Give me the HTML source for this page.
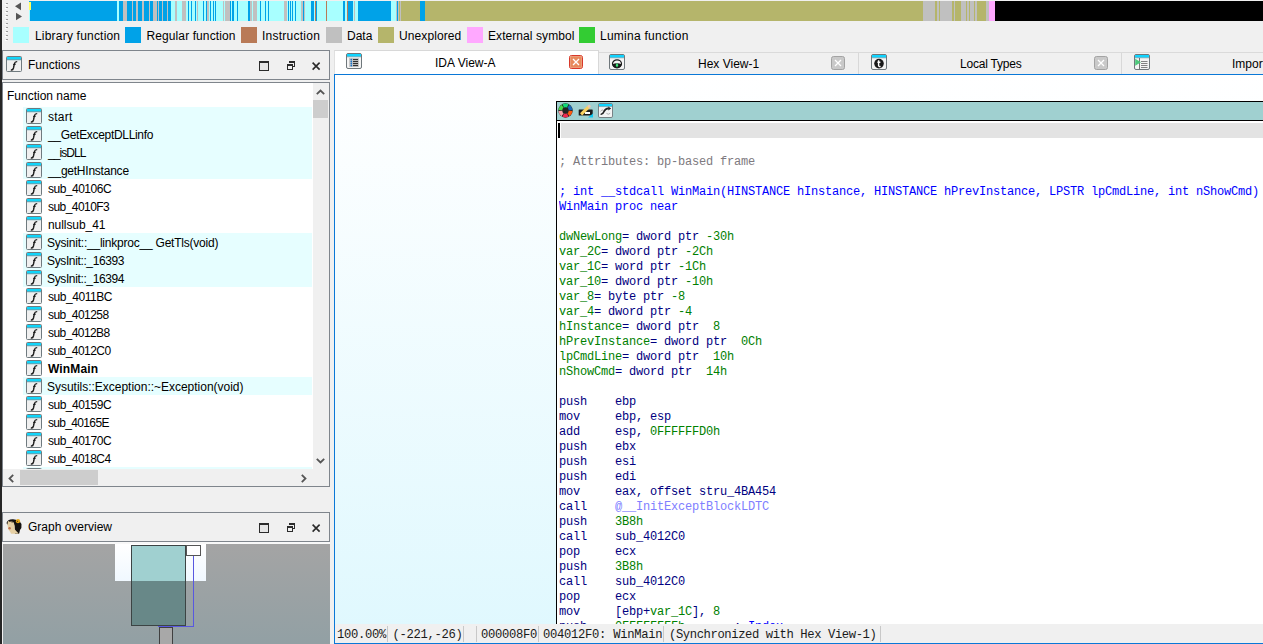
<!DOCTYPE html>
<html><head><meta charset="utf-8"><style>
*{box-sizing:border-box}
html,body{margin:0;padding:0}
body{width:1263px;height:644px;overflow:hidden;position:relative;background:#f0f0f0;font-family:"Liberation Sans",sans-serif;font-size:12px;color:#000}
.a{position:absolute}
svg{display:block}
.row{position:absolute;left:20px;width:289px;height:18px;white-space:nowrap}
.row .fi{position:absolute;left:3px;top:1px;width:16px;height:16px}
.row span{position:absolute;left:25px;top:3px;line-height:14px;transform-origin:0 0}
.cl{height:15px;line-height:15px;white-space:pre}
.code{font-family:"Liberation Mono",monospace;font-size:12px;letter-spacing:-0.2px}
.sw{position:absolute;top:27px;width:16px;height:16px}
.lg{position:absolute;top:29px;line-height:14px}
.tt{position:absolute;top:56px;line-height:14px}
.sep{position:absolute;top:626px;width:1px;height:16px;background:#c8c8c8}
.st{position:absolute;top:626px;line-height:19px;white-space:pre;font-family:"Liberation Mono",monospace;font-size:12.2px;letter-spacing:-0.3px;color:#1a1a1a}
</style></head><body>
<div class="a" style="left:0;top:0;width:2px;height:644px;background:#262626"></div>
<svg class="a" style="left:5px;top:2px" width="4" height="42"><rect x="1" y="1" width="2" height="1" fill="#9a9a9a"/><rect x="0" y="2" width="2" height="1" fill="#ffffff"/><rect x="1" y="5" width="2" height="1" fill="#9a9a9a"/><rect x="0" y="6" width="2" height="1" fill="#ffffff"/><rect x="1" y="9" width="2" height="1" fill="#9a9a9a"/><rect x="0" y="10" width="2" height="1" fill="#ffffff"/><rect x="1" y="13" width="2" height="1" fill="#9a9a9a"/><rect x="0" y="14" width="2" height="1" fill="#ffffff"/><rect x="1" y="17" width="2" height="1" fill="#9a9a9a"/><rect x="0" y="18" width="2" height="1" fill="#ffffff"/><rect x="1" y="21" width="2" height="1" fill="#9a9a9a"/><rect x="0" y="22" width="2" height="1" fill="#ffffff"/><rect x="1" y="25" width="2" height="1" fill="#9a9a9a"/><rect x="0" y="26" width="2" height="1" fill="#ffffff"/><rect x="1" y="29" width="2" height="1" fill="#9a9a9a"/><rect x="0" y="30" width="2" height="1" fill="#ffffff"/><rect x="1" y="33" width="2" height="1" fill="#9a9a9a"/><rect x="0" y="34" width="2" height="1" fill="#ffffff"/><rect x="1" y="37" width="2" height="1" fill="#9a9a9a"/><rect x="0" y="38" width="2" height="1" fill="#ffffff"/></svg>
<!-- nav -->
<div class="a" style="left:29px;top:1px;width:1234px;height:20px;background:linear-gradient(to right,#00a2e8 0px 88px,#a8ffff 88px 90px,#00a2e8 90px 94px,#c0c0c0 94px 98px,#00a2e8 98px 103px,#c0c0c0 103px 104px,#00a2e8 104px 107px,#c0c0c0 107px 109px,#00a2e8 109px 113px,#c0c0c0 113px 115px,#00a2e8 115px 120px,#c0c0c0 120px 121px,#00a2e8 121px 124px,#c0c0c0 124px 128px,#00a2e8 128px 129px,#c0c0c0 129px 130px,#00a2e8 130px 133px,#c0c0c0 133px 134px,#00a2e8 134px 138px,#c0c0c0 138px 139px,#00a2e8 139px 142px,#a8ffff 142px 146px,#c0c0c0 146px 148px,#a8ffff 148px 153px,#c0c0c0 153px 157px,#a8ffff 157px 159px,#00a2e8 159px 160px,#a8ffff 160px 162px,#00a2e8 162px 163px,#a8ffff 163px 166px,#00a2e8 166px 167px,#a8ffff 167px 168px,#c0c0c0 168px 169px,#a8ffff 169px 174px,#00a2e8 174px 175px,#a8ffff 175px 177px,#00a2e8 177px 178px,#c0c0c0 178px 180px,#a8ffff 180px 181px,#00a2e8 181px 182px,#a8ffff 182px 184px,#00a2e8 184px 185px,#a8ffff 185px 186px,#00a2e8 186px 187px,#a8ffff 187px 194px,#c0c0c0 194px 195px,#a8ffff 195px 196px,#c0c0c0 196px 201px,#00a2e8 201px 202px,#a8ffff 202px 203px,#00a2e8 203px 205px,#a8ffff 205px 208px,#00a2e8 208px 209px,#a8ffff 209px 219px,#00a2e8 219px 221px,#c0c0c0 221px 223px,#a8ffff 223px 224px,#c0c0c0 224px 228px,#a8ffff 228px 231px,#00a2e8 231px 232px,#a8ffff 232px 236px,#00a2e8 236px 237px,#a8ffff 237px 239px,#00a2e8 239px 240px,#a8ffff 240px 255px,#c0c0c0 255px 258px,#a8ffff 258px 259px,#00a2e8 259px 260px,#a8ffff 260px 261px,#00a2e8 261px 262px,#a8ffff 262px 263px,#00a2e8 263px 264px,#a8ffff 264px 266px,#00a2e8 266px 267px,#a8ffff 267px 272px,#c0c0c0 272px 274px,#00a2e8 274px 275px,#c0c0c0 275px 276px,#a8ffff 276px 282px,#00a2e8 282px 285px,#a8ffff 285px 286px,#b97a57 286px 287px,#00a2e8 287px 288px,#a8ffff 288px 297px,#b97a57 297px 298px,#a8ffff 298px 314px,#00a2e8 314px 316px,#a8ffff 316px 318px,#b97a57 318px 319px,#00a2e8 319px 324px,#a8ffff 324px 325px,#c0c0c0 325px 326px,#a8ffff 326px 329px,#00a2e8 329px 362px,#a8ffff 362px 367px,#c0c0c0 367px 368px,#00a2e8 368px 369px,#c0c0c0 369px 370px,#b5b56b 370px 371px,#c0c0c0 371px 372px,#b5b56b 372px 391px,#00a2e8 391px 396px,#b5b56b 396px 894px,#c0c0c0 894px 906px,#b5b56b 906px 908px,#c0c0c0 908px 910px,#b5b56b 910px 911px,#c0c0c0 911px 923px,#b5b56b 923px 925px,#c0c0c0 925px 926px,#b5b56b 926px 932px,#c0c0c0 932px 937px,#b5b56b 937px 938px,#c0c0c0 938px 940px,#b5b56b 940px 941px,#c0c0c0 941px 945px,#b5b56b 945px 946px,#c0c0c0 946px 948px,#b5b56b 948px 957px,#c0c0c0 957px 960px,#ffa8ff 960px 966px,#000000 966px 1234px)"></div>
<div class="a" style="left:29px;top:2px;width:2px;height:8px;background:#ffff60"></div><div class="a" style="left:29px;top:10px;width:1px;height:11px;background:#a8ffff"></div>
<svg class="a" style="left:13px;top:1px" width="12" height="21"><polygon points="2,5.3 8,1.5 8,9.2" fill="#555"/><polygon points="3,11.8 3,19.2 9,15.5" fill="#555"/></svg>
<!-- legend -->
<div class="sw" style="left:13px;background:#a8ffff"></div><div class="lg" style="left:35px;letter-spacing:0.2px">Library function</div>
<div class="sw" style="left:125px;background:#00a2e8"></div><div class="lg" style="left:146.5px;letter-spacing:0.1px">Regular function</div>
<div class="sw" style="left:241px;background:#b97a57"></div><div class="lg" style="left:262px;letter-spacing:0.25px">Instruction</div>
<div class="sw" style="left:326px;background:#c0c0c0"></div><div class="lg" style="left:347px">Data</div>
<div class="sw" style="left:378px;background:#b5b56b"></div><div class="lg" style="left:399px;letter-spacing:0.1px">Unexplored</div>
<div class="sw" style="left:467px;background:#ffa8ff"></div><div class="lg" style="left:488px;letter-spacing:0.07px">External symbol</div>
<div class="sw" style="left:579px;background:#33cc33"></div><div class="lg" style="left:600px;letter-spacing:0.26px">Lumina function</div>

<!-- functions header -->
<div class="a" style="left:2px;top:50px;width:328px;height:30px;border:1px solid #7f858c;background:#f0f0f0"></div>
<div class="a" style="left:6px;top:56px"><svg width="16" height="16" viewBox="0 0 16 16"><rect x="0.5" y="0.5" width="15" height="15" rx="1" fill="#f0f0f0" stroke="#6f7a7f"/><rect x="1" y="1" width="14" height="2.6" fill="#11d5fa"/><rect x="1" y="3.4" width="14" height="0.8" fill="#4a8c9a"/><path d="M4.8 13.9 Q6.9 14.4 7.5 12 L8.4 7.6 Q8.9 5.5 11.2 5.6" fill="none" stroke="#1a1a1a" stroke-width="1.4"/><path d="M7.2 8.6 L9.8 8.2" stroke="#1a1a1a" stroke-width="1"/></svg></div>
<div class="a" style="left:28px;top:58px;line-height:14px">Functions</div>
<div class="a" style="left:259px;top:61px;height:10px"><svg width="10" height="10" shape-rendering="crispEdges"><rect x="0" y="0" width="10" height="10" fill="#2b2b2b"/><rect x="1" y="2" width="8" height="7" fill="#e6e6e6"/></svg></div><div class="a" style="left:287px;top:61px;height:10px"><svg width="9" height="9" shape-rendering="crispEdges"><g fill="#2b2b2b"><rect x="2" y="0" width="6" height="2"/><rect x="7" y="2" width="1" height="4"/><rect x="6" y="5" width="2" height="1"/><rect x="0" y="3" width="6" height="2"/><rect x="0" y="5" width="1" height="4"/><rect x="5" y="5" width="1" height="4"/><rect x="0" y="8" width="6" height="1"/></g><rect x="1" y="5" width="4" height="3" fill="#f0f0f0"/></svg></div><div class="a" style="left:312px;top:62px;height:9px"><svg width="9" height="9"><path d="M0.6 0.6 L7.6 7.6 M7.6 0.6 L0.6 7.6" stroke="#2b2b2b" stroke-width="1.6"/></svg></div>

<!-- functions list -->
<div class="a" style="left:2px;top:82px;width:328px;height:405px;border:1px solid #7f858c;background:#fff;overflow:hidden">
  <div class="a" style="left:4px;top:6px;line-height:14px">Function name</div>
  <div class="row" style="top:24px;background:#e6feff"><div class="fi"><svg width="16" height="16" viewBox="0 0 16 16"><rect x="0.5" y="0.5" width="15" height="15" rx="1" fill="#f0f0f0" stroke="#6f7a7f"/><rect x="1" y="1" width="14" height="2.6" fill="#11d5fa"/><rect x="1" y="3.4" width="14" height="0.8" fill="#4a8c9a"/><path d="M4.8 13.9 Q6.9 14.4 7.5 12 L8.4 7.6 Q8.9 5.5 11.2 5.6" fill="none" stroke="#1a1a1a" stroke-width="1.4"/><path d="M7.2 8.6 L9.8 8.2" stroke="#1a1a1a" stroke-width="1"/></svg></div><span style="letter-spacing:0.250px;">start</span></div><div class="row" style="top:42px;background:#e6feff"><div class="fi"><svg width="16" height="16" viewBox="0 0 16 16"><rect x="0.5" y="0.5" width="15" height="15" rx="1" fill="#f0f0f0" stroke="#6f7a7f"/><rect x="1" y="1" width="14" height="2.6" fill="#11d5fa"/><rect x="1" y="3.4" width="14" height="0.8" fill="#4a8c9a"/><path d="M4.8 13.9 Q6.9 14.4 7.5 12 L8.4 7.6 Q8.9 5.5 11.2 5.6" fill="none" stroke="#1a1a1a" stroke-width="1.4"/><path d="M7.2 8.6 L9.8 8.2" stroke="#1a1a1a" stroke-width="1"/></svg></div><span style="letter-spacing:-0.312px;">__GetExceptDLLinfo</span></div><div class="row" style="top:60px;background:#e6feff"><div class="fi"><svg width="16" height="16" viewBox="0 0 16 16"><rect x="0.5" y="0.5" width="15" height="15" rx="1" fill="#f0f0f0" stroke="#6f7a7f"/><rect x="1" y="1" width="14" height="2.6" fill="#11d5fa"/><rect x="1" y="3.4" width="14" height="0.8" fill="#4a8c9a"/><path d="M4.8 13.9 Q6.9 14.4 7.5 12 L8.4 7.6 Q8.9 5.5 11.2 5.6" fill="none" stroke="#1a1a1a" stroke-width="1.4"/><path d="M7.2 8.6 L9.8 8.2" stroke="#1a1a1a" stroke-width="1"/></svg></div><span style="letter-spacing:-0.933px;">__isDLL</span></div><div class="row" style="top:78px;background:#e6feff"><div class="fi"><svg width="16" height="16" viewBox="0 0 16 16"><rect x="0.5" y="0.5" width="15" height="15" rx="1" fill="#f0f0f0" stroke="#6f7a7f"/><rect x="1" y="1" width="14" height="2.6" fill="#11d5fa"/><rect x="1" y="3.4" width="14" height="0.8" fill="#4a8c9a"/><path d="M4.8 13.9 Q6.9 14.4 7.5 12 L8.4 7.6 Q8.9 5.5 11.2 5.6" fill="none" stroke="#1a1a1a" stroke-width="1.4"/><path d="M7.2 8.6 L9.8 8.2" stroke="#1a1a1a" stroke-width="1"/></svg></div><span style="letter-spacing:-0.231px;">__getHInstance</span></div><div class="row" style="top:96px;background:transparent"><div class="fi"><svg width="16" height="16" viewBox="0 0 16 16"><rect x="0.5" y="0.5" width="15" height="15" rx="1" fill="#f0f0f0" stroke="#6f7a7f"/><rect x="1" y="1" width="14" height="2.6" fill="#11d5fa"/><rect x="1" y="3.4" width="14" height="0.8" fill="#4a8c9a"/><path d="M4.8 13.9 Q6.9 14.4 7.5 12 L8.4 7.6 Q8.9 5.5 11.2 5.6" fill="none" stroke="#1a1a1a" stroke-width="1.4"/><path d="M7.2 8.6 L9.8 8.2" stroke="#1a1a1a" stroke-width="1"/></svg></div><span style="letter-spacing:-0.500px;">sub_40106C</span></div><div class="row" style="top:114px;background:transparent"><div class="fi"><svg width="16" height="16" viewBox="0 0 16 16"><rect x="0.5" y="0.5" width="15" height="15" rx="1" fill="#f0f0f0" stroke="#6f7a7f"/><rect x="1" y="1" width="14" height="2.6" fill="#11d5fa"/><rect x="1" y="3.4" width="14" height="0.8" fill="#4a8c9a"/><path d="M4.8 13.9 Q6.9 14.4 7.5 12 L8.4 7.6 Q8.9 5.5 11.2 5.6" fill="none" stroke="#1a1a1a" stroke-width="1.4"/><path d="M7.2 8.6 L9.8 8.2" stroke="#1a1a1a" stroke-width="1"/></svg></div><span style="letter-spacing:-0.556px;">sub_4010F3</span></div><div class="row" style="top:132px;background:transparent"><div class="fi"><svg width="16" height="16" viewBox="0 0 16 16"><rect x="0.5" y="0.5" width="15" height="15" rx="1" fill="#f0f0f0" stroke="#6f7a7f"/><rect x="1" y="1" width="14" height="2.6" fill="#11d5fa"/><rect x="1" y="3.4" width="14" height="0.8" fill="#4a8c9a"/><path d="M4.8 13.9 Q6.9 14.4 7.5 12 L8.4 7.6 Q8.9 5.5 11.2 5.6" fill="none" stroke="#1a1a1a" stroke-width="1.4"/><path d="M7.2 8.6 L9.8 8.2" stroke="#1a1a1a" stroke-width="1"/></svg></div><span style="letter-spacing:-0.067px;">nullsub_41</span></div><div class="row" style="top:150px;background:#e6feff"><div class="fi"><svg width="16" height="16" viewBox="0 0 16 16"><rect x="0.5" y="0.5" width="15" height="15" rx="1" fill="#f0f0f0" stroke="#6f7a7f"/><rect x="1" y="1" width="14" height="2.6" fill="#11d5fa"/><rect x="1" y="3.4" width="14" height="0.8" fill="#4a8c9a"/><path d="M4.8 13.9 Q6.9 14.4 7.5 12 L8.4 7.6 Q8.9 5.5 11.2 5.6" fill="none" stroke="#1a1a1a" stroke-width="1.4"/><path d="M7.2 8.6 L9.8 8.2" stroke="#1a1a1a" stroke-width="1"/></svg></div><span style="margin-left:-1px;letter-spacing:-0.221px;">Sysinit::__linkproc__ GetTls(void)</span></div><div class="row" style="top:168px;background:#e6feff"><div class="fi"><svg width="16" height="16" viewBox="0 0 16 16"><rect x="0.5" y="0.5" width="15" height="15" rx="1" fill="#f0f0f0" stroke="#6f7a7f"/><rect x="1" y="1" width="14" height="2.6" fill="#11d5fa"/><rect x="1" y="3.4" width="14" height="0.8" fill="#4a8c9a"/><path d="M4.8 13.9 Q6.9 14.4 7.5 12 L8.4 7.6 Q8.9 5.5 11.2 5.6" fill="none" stroke="#1a1a1a" stroke-width="1.4"/><path d="M7.2 8.6 L9.8 8.2" stroke="#1a1a1a" stroke-width="1"/></svg></div><span style="margin-left:-1px;letter-spacing:-0.371px;">SysInit::_16393</span></div><div class="row" style="top:186px;background:#e6feff"><div class="fi"><svg width="16" height="16" viewBox="0 0 16 16"><rect x="0.5" y="0.5" width="15" height="15" rx="1" fill="#f0f0f0" stroke="#6f7a7f"/><rect x="1" y="1" width="14" height="2.6" fill="#11d5fa"/><rect x="1" y="3.4" width="14" height="0.8" fill="#4a8c9a"/><path d="M4.8 13.9 Q6.9 14.4 7.5 12 L8.4 7.6 Q8.9 5.5 11.2 5.6" fill="none" stroke="#1a1a1a" stroke-width="1.4"/><path d="M7.2 8.6 L9.8 8.2" stroke="#1a1a1a" stroke-width="1"/></svg></div><span style="margin-left:-1px;letter-spacing:-0.371px;">SysInit::_16394</span></div><div class="row" style="top:204px;background:transparent"><div class="fi"><svg width="16" height="16" viewBox="0 0 16 16"><rect x="0.5" y="0.5" width="15" height="15" rx="1" fill="#f0f0f0" stroke="#6f7a7f"/><rect x="1" y="1" width="14" height="2.6" fill="#11d5fa"/><rect x="1" y="3.4" width="14" height="0.8" fill="#4a8c9a"/><path d="M4.8 13.9 Q6.9 14.4 7.5 12 L8.4 7.6 Q8.9 5.5 11.2 5.6" fill="none" stroke="#1a1a1a" stroke-width="1.4"/><path d="M7.2 8.6 L9.8 8.2" stroke="#1a1a1a" stroke-width="1"/></svg></div><span style="letter-spacing:-0.456px;">sub_4011BC</span></div><div class="row" style="top:222px;background:transparent"><div class="fi"><svg width="16" height="16" viewBox="0 0 16 16"><rect x="0.5" y="0.5" width="15" height="15" rx="1" fill="#f0f0f0" stroke="#6f7a7f"/><rect x="1" y="1" width="14" height="2.6" fill="#11d5fa"/><rect x="1" y="3.4" width="14" height="0.8" fill="#4a8c9a"/><path d="M4.8 13.9 Q6.9 14.4 7.5 12 L8.4 7.6 Q8.9 5.5 11.2 5.6" fill="none" stroke="#1a1a1a" stroke-width="1.4"/><path d="M7.2 8.6 L9.8 8.2" stroke="#1a1a1a" stroke-width="1"/></svg></div><span style="letter-spacing:-0.556px;">sub_401258</span></div><div class="row" style="top:240px;background:transparent"><div class="fi"><svg width="16" height="16" viewBox="0 0 16 16"><rect x="0.5" y="0.5" width="15" height="15" rx="1" fill="#f0f0f0" stroke="#6f7a7f"/><rect x="1" y="1" width="14" height="2.6" fill="#11d5fa"/><rect x="1" y="3.4" width="14" height="0.8" fill="#4a8c9a"/><path d="M4.8 13.9 Q6.9 14.4 7.5 12 L8.4 7.6 Q8.9 5.5 11.2 5.6" fill="none" stroke="#1a1a1a" stroke-width="1.4"/><path d="M7.2 8.6 L9.8 8.2" stroke="#1a1a1a" stroke-width="1"/></svg></div><span style="letter-spacing:-0.578px;">sub_4012B8</span></div><div class="row" style="top:258px;background:transparent"><div class="fi"><svg width="16" height="16" viewBox="0 0 16 16"><rect x="0.5" y="0.5" width="15" height="15" rx="1" fill="#f0f0f0" stroke="#6f7a7f"/><rect x="1" y="1" width="14" height="2.6" fill="#11d5fa"/><rect x="1" y="3.4" width="14" height="0.8" fill="#4a8c9a"/><path d="M4.8 13.9 Q6.9 14.4 7.5 12 L8.4 7.6 Q8.9 5.5 11.2 5.6" fill="none" stroke="#1a1a1a" stroke-width="1.4"/><path d="M7.2 8.6 L9.8 8.2" stroke="#1a1a1a" stroke-width="1"/></svg></div><span style="letter-spacing:-0.556px;">sub_4012C0</span></div><div class="row" style="top:276px;background:transparent"><div class="fi"><svg width="16" height="16" viewBox="0 0 16 16"><rect x="0.5" y="0.5" width="15" height="15" rx="1" fill="#f0f0f0" stroke="#6f7a7f"/><rect x="1" y="1" width="14" height="2.6" fill="#11d5fa"/><rect x="1" y="3.4" width="14" height="0.8" fill="#4a8c9a"/><path d="M4.8 13.9 Q6.9 14.4 7.5 12 L8.4 7.6 Q8.9 5.5 11.2 5.6" fill="none" stroke="#1a1a1a" stroke-width="1.4"/><path d="M7.2 8.6 L9.8 8.2" stroke="#1a1a1a" stroke-width="1"/></svg></div><span style="letter-spacing:0.133px;font-weight:bold">WinMain</span></div><div class="row" style="top:294px;background:#e6feff"><div class="fi"><svg width="16" height="16" viewBox="0 0 16 16"><rect x="0.5" y="0.5" width="15" height="15" rx="1" fill="#f0f0f0" stroke="#6f7a7f"/><rect x="1" y="1" width="14" height="2.6" fill="#11d5fa"/><rect x="1" y="3.4" width="14" height="0.8" fill="#4a8c9a"/><path d="M4.8 13.9 Q6.9 14.4 7.5 12 L8.4 7.6 Q8.9 5.5 11.2 5.6" fill="none" stroke="#1a1a1a" stroke-width="1.4"/><path d="M7.2 8.6 L9.8 8.2" stroke="#1a1a1a" stroke-width="1"/></svg></div><span style="margin-left:-1px;letter-spacing:-0.017px;">Sysutils::Exception::~Exception(void)</span></div><div class="row" style="top:312px;background:transparent"><div class="fi"><svg width="16" height="16" viewBox="0 0 16 16"><rect x="0.5" y="0.5" width="15" height="15" rx="1" fill="#f0f0f0" stroke="#6f7a7f"/><rect x="1" y="1" width="14" height="2.6" fill="#11d5fa"/><rect x="1" y="3.4" width="14" height="0.8" fill="#4a8c9a"/><path d="M4.8 13.9 Q6.9 14.4 7.5 12 L8.4 7.6 Q8.9 5.5 11.2 5.6" fill="none" stroke="#1a1a1a" stroke-width="1.4"/><path d="M7.2 8.6 L9.8 8.2" stroke="#1a1a1a" stroke-width="1"/></svg></div><span style="letter-spacing:-0.500px;">sub_40159C</span></div><div class="row" style="top:330px;background:transparent"><div class="fi"><svg width="16" height="16" viewBox="0 0 16 16"><rect x="0.5" y="0.5" width="15" height="15" rx="1" fill="#f0f0f0" stroke="#6f7a7f"/><rect x="1" y="1" width="14" height="2.6" fill="#11d5fa"/><rect x="1" y="3.4" width="14" height="0.8" fill="#4a8c9a"/><path d="M4.8 13.9 Q6.9 14.4 7.5 12 L8.4 7.6 Q8.9 5.5 11.2 5.6" fill="none" stroke="#1a1a1a" stroke-width="1.4"/><path d="M7.2 8.6 L9.8 8.2" stroke="#1a1a1a" stroke-width="1"/></svg></div><span style="letter-spacing:-0.667px;">sub_40165E</span></div><div class="row" style="top:348px;background:transparent"><div class="fi"><svg width="16" height="16" viewBox="0 0 16 16"><rect x="0.5" y="0.5" width="15" height="15" rx="1" fill="#f0f0f0" stroke="#6f7a7f"/><rect x="1" y="1" width="14" height="2.6" fill="#11d5fa"/><rect x="1" y="3.4" width="14" height="0.8" fill="#4a8c9a"/><path d="M4.8 13.9 Q6.9 14.4 7.5 12 L8.4 7.6 Q8.9 5.5 11.2 5.6" fill="none" stroke="#1a1a1a" stroke-width="1.4"/><path d="M7.2 8.6 L9.8 8.2" stroke="#1a1a1a" stroke-width="1"/></svg></div><span style="letter-spacing:-0.500px;">sub_40170C</span></div><div class="row" style="top:366px;background:transparent"><div class="fi"><svg width="16" height="16" viewBox="0 0 16 16"><rect x="0.5" y="0.5" width="15" height="15" rx="1" fill="#f0f0f0" stroke="#6f7a7f"/><rect x="1" y="1" width="14" height="2.6" fill="#11d5fa"/><rect x="1" y="3.4" width="14" height="0.8" fill="#4a8c9a"/><path d="M4.8 13.9 Q6.9 14.4 7.5 12 L8.4 7.6 Q8.9 5.5 11.2 5.6" fill="none" stroke="#1a1a1a" stroke-width="1.4"/><path d="M7.2 8.6 L9.8 8.2" stroke="#1a1a1a" stroke-width="1"/></svg></div><span style="letter-spacing:-0.556px;">sub_4018C4</span></div><div class="row" style="top:384px;background:#e6feff"><div class="fi"><svg width="16" height="16" viewBox="0 0 16 16"><rect x="0.5" y="0.5" width="15" height="15" rx="1" fill="#f0f0f0" stroke="#6f7a7f"/><rect x="1" y="1" width="14" height="2.6" fill="#11d5fa"/><rect x="1" y="3.4" width="14" height="0.8" fill="#4a8c9a"/><path d="M4.8 13.9 Q6.9 14.4 7.5 12 L8.4 7.6 Q8.9 5.5 11.2 5.6" fill="none" stroke="#1a1a1a" stroke-width="1.4"/><path d="M7.2 8.6 L9.8 8.2" stroke="#1a1a1a" stroke-width="1"/></svg></div><span style="letter-spacing:0.000px;"></span></div>
  <div class="a" style="left:310px;top:0;width:16px;height:387px;background:#f0f0f0"></div>
  <div class="a" style="left:310px;top:17px;width:15px;height:18px;background:#cdcdcd"></div>
  <div class="a" style="left:313px;top:6px"><svg width="9" height="6"><path d="M0.8 5.2 L4.5 1.5 L8.2 5.2" fill="none" stroke="#555" stroke-width="1.8"/></svg></div>
  <div class="a" style="left:313px;top:375px"><svg width="9" height="6"><path d="M0.8 0.8 L4.5 4.5 L8.2 0.8" fill="none" stroke="#555" stroke-width="1.8"/></svg></div>
  <div class="a" style="left:0;top:386px;width:326px;height:17px;background:#f0f0f0"></div>
  <div class="a" style="left:17px;top:387px;width:78px;height:15px;background:#cdcdcd"></div>
  <div class="a" style="left:5px;top:391px"><svg width="6" height="9"><path d="M5.2 0.8 L1.5 4.5 L5.2 8.2" fill="none" stroke="#555" stroke-width="1.8"/></svg></div>
  <div class="a" style="left:298px;top:391px"><svg width="6" height="9"><path d="M0.8 0.8 L4.5 4.5 L0.8 8.2" fill="none" stroke="#555" stroke-width="1.8"/></svg></div>
</div>

<!-- graph overview header -->
<div class="a" style="left:2px;top:512px;width:328px;height:30px;border:1px solid #7f858c;background:#f0f0f0"></div>
<div class="a" style="left:6px;top:519px"><svg width="16" height="16" viewBox="0 0 16 16"><path d="M0.5 4 Q1.5 0 7 0.2 Q13 0.5 15.5 5 Q16 9 14 11 Q13.5 13.5 13 15 L9 15 Q9 11 8.5 8 Q8 3 5 2.5 Q2 2.5 1.5 6 Z" fill="#15120f"/><path d="M2 2.2 Q5.5 1.4 7.8 3.5 Q9 6.5 8.5 10 Q10 12 13 14.8 L5 14.8 Q4.5 13 3.5 12 Q1.5 10 1.5 6 Q1.6 3.5 2 2.2Z" fill="#e6d0a4"/><path d="M3 2.5 Q5 1.8 6.5 3.5" stroke="#3a2a1a" stroke-width="0.8" fill="none"/><circle cx="3.6" cy="9.2" r="1.2" fill="#c07050"/><circle cx="12" cy="2.2" r="2.1" fill="#e8a818"/><circle cx="11.5" cy="2.3" r="0.6" fill="#604010"/></svg></div>
<div class="a" style="left:28px;top:520px;line-height:14px">Graph overview</div>
<div class="a" style="left:259px;top:523px;height:10px"><svg width="10" height="10" shape-rendering="crispEdges"><rect x="0" y="0" width="10" height="10" fill="#2b2b2b"/><rect x="1" y="2" width="8" height="7" fill="#e6e6e6"/></svg></div><div class="a" style="left:287px;top:523px;height:10px"><svg width="9" height="9" shape-rendering="crispEdges"><g fill="#2b2b2b"><rect x="2" y="0" width="6" height="2"/><rect x="7" y="2" width="1" height="4"/><rect x="6" y="5" width="2" height="1"/><rect x="0" y="3" width="6" height="2"/><rect x="0" y="5" width="1" height="4"/><rect x="5" y="5" width="1" height="4"/><rect x="0" y="8" width="6" height="1"/></g><rect x="1" y="5" width="4" height="3" fill="#f0f0f0"/></svg></div><div class="a" style="left:312px;top:524px;height:9px"><svg width="9" height="9"><path d="M0.6 0.6 L7.6 7.6 M7.6 0.6 L0.6 7.6" stroke="#2b2b2b" stroke-width="1.6"/></svg></div>
<div class="a" style="left:2px;top:542px;width:328px;height:2px;background:#f8f8f8"></div>
<div class="a" style="left:3px;top:544px;width:327px;height:100px;background:linear-gradient(#a4a4a4,#92a0a4);overflow:hidden">
  <div class="a" style="left:112px;top:0;width:91px;height:37px;background:linear-gradient(#ffffff,#f0f8ff)"></div>
  <div class="a" style="left:128px;top:1px;width:55px;height:81px;background:#688888;border:1px solid #3c4444"></div>
  <div class="a" style="left:129px;top:2px;width:53px;height:35px;background:#a0d0d0"></div>
  <div class="a" style="left:183px;top:1px;width:15px;height:11px;background:#fff;border:1px solid #555"></div>
  <div class="a" style="left:190px;top:12px;width:1px;height:71px;background:#5858e0"></div>
  <div class="a" style="left:155px;top:82px;width:36px;height:1px;background:#5858e0"></div>
  <div class="a" style="left:156px;top:83px;width:14px;height:20px;background:#a8a8a8;border:1px solid #404040"></div>
</div>

<!-- tabs -->
<div class="a" style="left:334px;top:52px;width:929px;height:22px;border-top:1px solid #dadada;background:#f0f0f0"></div>
<div class="a" style="left:334px;top:50px;width:265px;height:24px;background:#fff;border-top:1px solid #d8d8d8;border-left:1px solid #e0e0e0"></div>
<div class="a" style="left:598px;top:50px;width:1px;height:24px;background:#d8d8d8"></div>
<div class="a" style="left:858px;top:53px;width:1px;height:21px;background:#d8d8d8"></div>
<div class="a" style="left:1121px;top:53px;width:1px;height:21px;background:#d8d8d8"></div>
<div class="a" style="left:346px;top:53px"><svg width="16" height="16" viewBox="0 0 16 16"><rect x="0.5" y="0.5" width="15" height="15" rx="1.5" fill="#f4f4f4" stroke="#6f777b"/><rect x="1" y="1" width="14" height="2.6" fill="#10d4ff"/><line x1="1" y1="3.8" x2="15" y2="3.8" stroke="#5a8a96" stroke-width="0.6"/><rect x="3" y="5" width="10" height="9" fill="#c8c8c8"/><g fill="#1a73c8"><circle cx="5.3" cy="6.6" r="0.9"/><circle cx="5.3" cy="8.6" r="0.9"/><circle cx="5.3" cy="10.6" r="0.9"/><circle cx="5.3" cy="12.6" r="0.9"/></g><g stroke="#222" stroke-width="1"><line x1="7" y1="6.6" x2="12" y2="6.6"/><line x1="7" y1="8.6" x2="12" y2="8.6"/><line x1="7" y1="10.6" x2="12" y2="10.6"/><line x1="7" y1="12.6" x2="12" y2="12.6"/></g></svg></div>
<div class="a" style="left:609px;top:54px"><svg width="16" height="16" viewBox="0 0 16 16"><rect x="0.5" y="0.5" width="15" height="15" rx="1.5" fill="#f4f4f4" stroke="#6f777b"/><rect x="1" y="1" width="14" height="2.6" fill="#10d4ff"/><line x1="1" y1="3.8" x2="15" y2="3.8" stroke="#5a8a96" stroke-width="0.6"/><ellipse cx="8" cy="9.8" rx="4.5" ry="4" fill="none" stroke="#1a1a1a" stroke-width="1.2"/><path d="M3.6 10.3 Q3.8 13.9 8 13.9 Q12.2 13.9 12.4 10.3 Q10 9.2 8 9.4 Q6 9.2 3.6 10.3Z" fill="#1a1a1a"/><path d="M8 8.9 L9.4 11.2 L8 13.4 L6.6 11.2Z" fill="#3ee87a"/></svg></div>
<div class="a" style="left:871px;top:54px"><svg width="16" height="16" viewBox="0 0 16 16"><rect x="0.5" y="0.5" width="15" height="15" rx="1.5" fill="#f4f4f4" stroke="#6f777b"/><rect x="1" y="1" width="14" height="2.6" fill="#10d4ff"/><line x1="1" y1="3.8" x2="15" y2="3.8" stroke="#5a8a96" stroke-width="0.6"/><circle cx="8" cy="9.6" r="4.8" fill="#1a1a1a"/><path d="M7.6 6.2 L7.6 11.6 Q7.8 12.9 9.6 12.5 M6.4 8.2 L9.4 8.2" stroke="#fff" stroke-width="1.4" fill="none"/></svg></div>
<div class="a" style="left:1134px;top:54px"><svg width="16" height="16" viewBox="0 0 16 16"><rect x="0.5" y="0.5" width="15" height="15" rx="1.5" fill="#f4f4f4" stroke="#6f777b"/><rect x="1" y="1" width="14" height="2.6" fill="#10d4ff"/><line x1="1" y1="3.8" x2="15" y2="3.8" stroke="#5a8a96" stroke-width="0.6"/><line x1="5.5" y1="4" x2="5.5" y2="15" stroke="#666" stroke-width="0.9"/><path d="M1.2 4.8 L7 8.3 L1.2 11.8 Z" fill="#4cc87a"/><g stroke="#666" stroke-width="0.8"><line x1="7" y1="7.5" x2="13.5" y2="7.5"/><line x1="7" y1="9.5" x2="13.5" y2="9.5"/><line x1="7" y1="11.5" x2="13.5" y2="11.5"/><line x1="7" y1="13.5" x2="13.5" y2="13.5"/></g></svg></div>
<div class="a" style="left:569px;top:55px"><svg width="14" height="14"><rect x="0.5" y="0.5" width="13" height="13" rx="2" fill="#e8895c" stroke="#d8382a"/><rect x="1.5" y="1.5" width="11" height="11" fill="none" stroke="#eda588" stroke-width="0.7"/><path d="M4 4 L10 10 M10 4 L4 10" stroke="#fff" stroke-width="1.3"/></svg></div>
<div class="a" style="left:831px;top:56px"><svg width="14" height="14"><rect x="0.5" y="0.5" width="13" height="13" rx="2" fill="#c9c9c9" stroke="#a3a3a3"/><path d="M4 4 L10 10 M10 4 L4 10" stroke="#fff" stroke-width="1.3"/></svg></div>
<div class="a" style="left:1094px;top:56px"><svg width="14" height="14"><rect x="0.5" y="0.5" width="13" height="13" rx="2" fill="#c9c9c9" stroke="#a3a3a3"/><path d="M4 4 L10 10 M10 4 L4 10" stroke="#fff" stroke-width="1.3"/></svg></div>
<div class="tt" style="left:435px">IDA View-A</div>
<div class="tt" style="left:698px;top:57px">Hex View-1</div>
<div class="tt" style="left:960px;top:57px;letter-spacing:-0.2px">Local Types</div>
<div class="tt" style="left:1232px;top:57px">Imports</div>
<div class="a" style="left:334px;top:74px;width:929px;height:1px;background:#0a78d7"></div>

<!-- ida view -->
<div class="a" style="left:334px;top:75px;width:929px;height:569px;border-left:1px solid #0a78d7;background:linear-gradient(#ffffff,#dff8fe)"></div>
<div class="a" style="left:556px;top:101px;width:707px;height:523px;background:#fff;border-left:1px solid #000;border-top:1px solid #000"></div>
<div class="a" style="left:557px;top:102px;width:706px;height:19px;background:#a0d0d0;border-bottom:1px solid #000"></div>
<div class="a" style="left:558px;top:103px"><svg width="15" height="15" viewBox="0 0 15 15"><circle cx="7.5" cy="7.5" r="7.2" fill="#222"/><path d="M7.5 7.5 L4.43 1.21 A7 7 0 0 1 10.57 1.21 Z" fill="#10d878"/><path d="M7.5 7.5 L11.41 1.70 A7 7 0 0 1 14.48 7.01 Z" fill="#1a6ab8"/><path d="M7.5 7.5 L14.48 7.99 A7 7 0 0 1 11.41 13.30 Z" fill="#ff5a10"/><path d="M7.5 7.5 L10.57 13.79 A7 7 0 0 1 4.43 13.79 Z" fill="#f02850"/><path d="M7.5 7.5 L3.59 13.30 A7 7 0 0 1 0.52 7.99 Z" fill="#f8a0a8"/><path d="M7.5 7.5 L0.52 7.01 A7 7 0 0 1 3.59 1.70 Z" fill="#48d848"/><circle cx="7.5" cy="7.5" r="3.2" fill="#222"/></svg></div>
<div class="a" style="left:578px;top:103px"><svg width="16" height="15" viewBox="0 0 16 15"><rect x="0.7" y="6.5" width="14" height="6" rx="0.5" fill="#1a1a1a"/><rect x="7" y="9" width="5" height="2" fill="#fff"/><path d="M2 10.3 L9.8 2.5 L12 4.7 L4.2 12.5 Z" fill="#f8d060"/><circle cx="11.2" cy="3.2" r="1.5" fill="#e8c8b8"/><path d="M10 14.6 L15 14.6 L15 10.4 Z" fill="#10c8f0"/></svg></div>
<div class="a" style="left:598px;top:103px"><svg width="15" height="15" viewBox="0 0 16 16"><rect x="0.5" y="0.5" width="15" height="15" rx="1.5" fill="#f4f4f4" stroke="#6f777b"/><rect x="1" y="1" width="14" height="2.6" fill="#10d4ff"/><line x1="1" y1="3.8" x2="15" y2="3.8" stroke="#5a8a96" stroke-width="0.6"/><path d="M2.8 9 Q4 6 6 8" fill="none" stroke="#aaa" stroke-width="1"/><path d="M9 11 Q11 13 13 11" fill="none" stroke="#aaa" stroke-width="1"/><path d="M2.8 12 Q5 12.5 6.5 9 Q8 5.5 11.5 5.8" fill="none" stroke="#222" stroke-width="1.7"/><path d="M11 3.6 L14 5.8 L11 8 Z" fill="#222"/></svg></div>
<div class="a" style="left:561px;top:123px;width:702px;height:15px;background:#e3e3e3"></div>
<div class="a" style="left:558px;top:123px;width:2px;height:15px;background:#000"></div>
<div class="a code" style="left:559px;top:140px;width:704px;height:484px;overflow:hidden"><div class="cl">&nbsp;</div><div class="cl"><span style="color:#7e7a80">; Attributes: bp-based frame</span></div><div class="cl">&nbsp;</div><div class="cl"><span style="color:#0000ff">; int __stdcall WinMain(HINSTANCE hInstance, HINSTANCE hPrevInstance, LPSTR lpCmdLine, int nShowCmd)</span></div><div class="cl"><span style="color:#0000ff">WinMain proc near</span></div><div class="cl">&nbsp;</div><div class="cl"><span style="color:#008000">dwNewLong</span><span style="color:#000080">= dword ptr </span><span style="color:#008000">-30h</span></div><div class="cl"><span style="color:#008000">var_2C</span><span style="color:#000080">= dword ptr </span><span style="color:#008000">-2Ch</span></div><div class="cl"><span style="color:#008000">var_1C</span><span style="color:#000080">= word ptr </span><span style="color:#008000">-1Ch</span></div><div class="cl"><span style="color:#008000">var_10</span><span style="color:#000080">= dword ptr </span><span style="color:#008000">-10h</span></div><div class="cl"><span style="color:#008000">var_8</span><span style="color:#000080">= byte ptr </span><span style="color:#008000">-8</span></div><div class="cl"><span style="color:#008000">var_4</span><span style="color:#000080">= dword ptr </span><span style="color:#008000">-4</span></div><div class="cl"><span style="color:#008000">hInstance</span><span style="color:#000080">= dword ptr  </span><span style="color:#008000">8</span></div><div class="cl"><span style="color:#008000">hPrevInstance</span><span style="color:#000080">= dword ptr  </span><span style="color:#008000">0Ch</span></div><div class="cl"><span style="color:#008000">lpCmdLine</span><span style="color:#000080">= dword ptr  </span><span style="color:#008000">10h</span></div><div class="cl"><span style="color:#008000">nShowCmd</span><span style="color:#000080">= dword ptr  </span><span style="color:#008000">14h</span></div><div class="cl">&nbsp;</div><div class="cl"><span style="color:#000080">push    ebp</span></div><div class="cl"><span style="color:#000080">mov     ebp, esp</span></div><div class="cl"><span style="color:#000080">add     esp, </span><span style="color:#008000">0FFFFFFD0h</span></div><div class="cl"><span style="color:#000080">push    ebx</span></div><div class="cl"><span style="color:#000080">push    esi</span></div><div class="cl"><span style="color:#000080">push    edi</span></div><div class="cl"><span style="color:#000080">mov     eax, offset stru_4BA454</span></div><div class="cl"><span style="color:#000080">call    </span><span style="color:#8080ff">@__InitExceptBlockLDTC</span></div><div class="cl"><span style="color:#000080">push    </span><span style="color:#008000">3B8h</span></div><div class="cl"><span style="color:#000080">call    sub_4012C0</span></div><div class="cl"><span style="color:#000080">pop     ecx</span></div><div class="cl"><span style="color:#000080">push    </span><span style="color:#008000">3B8h</span></div><div class="cl"><span style="color:#000080">call    sub_4012C0</span></div><div class="cl"><span style="color:#000080">pop     ecx</span></div><div class="cl"><span style="color:#000080">mov     [ebp+</span><span style="color:#008000">var_1C</span><span style="color:#000080">], </span><span style="color:#008000">8</span></div><div class="cl"><span style="color:#000080">push    </span><span style="color:#008000">0FFFFFFFFh</span><span style="color:#000080">       ; </span><span style="color:#0000ff">Index</span></div></div>

<!-- status -->
<div class="a" style="left:335px;top:624px;width:928px;height:19px;background:#f0f0f0"></div>
<div class="st" style="left:337px">100.00%</div>
<div class="sep" style="left:387px"></div>
<div class="st" style="left:392.5px">(-221,-26)</div>
<div class="sep" style="left:463px"></div>
<div class="sep" style="left:476px"></div>
<div class="st" style="left:481px">000008F0</div>
<div class="sep" style="left:538px"></div>
<div class="st" style="left:543px">004012F0: WinMain</div>
<div class="sep" style="left:663px"></div>
<div class="st" style="left:669px;letter-spacing:-0.4px">(Synchronized with Hex View-1)</div>
<div class="sep" style="left:880px"></div>
<div class="a" style="left:334px;top:643px;width:929px;height:1px;background:#0a78d7"></div>
</body></html>
